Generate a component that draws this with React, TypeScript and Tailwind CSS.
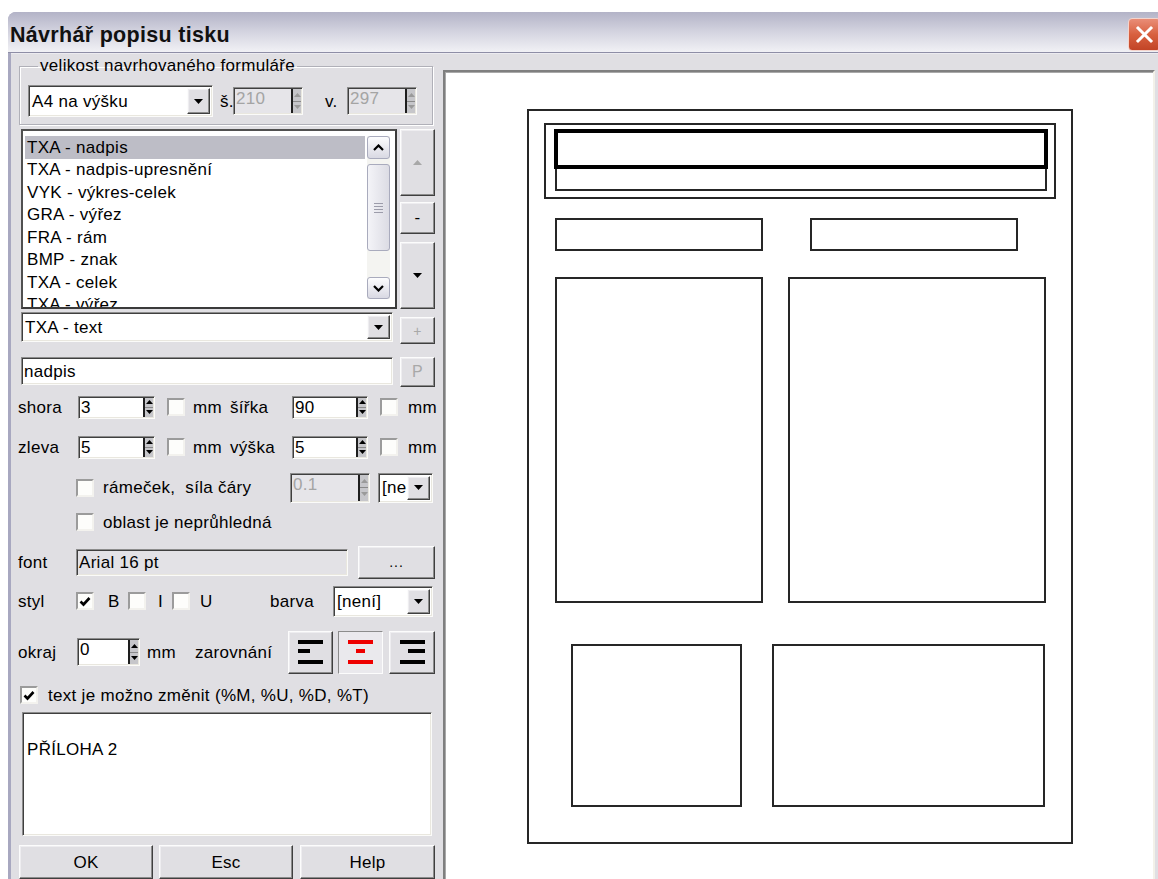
import React from "react";

// Win32-style bevels
const SUNKEN =
  "border border-t-[#8c8c8c] border-l-[#8c8c8c] border-r-[#fbfbf9] border-b-[#fbfbf9] shadow-[inset_1px_1px_0_#3f3f3f,inset_-1px_-1px_0_#e9e7df]";
const RAISED =
  "bg-[#e0dfe3] border border-t-[#fcfcfc] border-l-[#fcfcfc] border-r-[#3f3f3f] border-b-[#3f3f3f] shadow-[inset_-1px_-1px_0_#8c8c8c,inset_1px_1px_0_#eeedf0]";
const PRESSED =
  "bg-[#eae9ed] border border-t-[#8c8c8c] border-l-[#8c8c8c] border-r-[#fcfcfc] border-b-[#fcfcfc]";

function TriDown({ color = "#000" }: { color?: string }) {
  return (
    <svg width="9" height="5" viewBox="0 0 9 5">
      <path d="M0 0H9L4.5 5Z" fill={color} />
    </svg>
  );
}

function TriUp({ color = "#000", w = 9, h = 5 }: { color?: string; w?: number; h?: number }) {
  return (
    <svg width={w} height={h} viewBox={`0 0 ${w} ${h}`}>
      <path d={`M0 ${h}H${w}L${w / 2} 0Z`} fill={color} />
    </svg>
  );
}

function DropBtn() {
  return (
    <div className={`${RAISED} w-[23px] my-[2px] mr-[2px] flex items-center justify-center shrink-0`}>
      <TriDown />
    </div>
  );
}

function Combo({ cls, text }: { cls: string; text: string }) {
  return (
    <div className={`${SUNKEN} bg-white flex ${cls}`}>
      <span className="flex-1 min-w-0 overflow-hidden whitespace-nowrap pl-[3px] self-center">{text}</span>
      <DropBtn />
    </div>
  );
}

function Spinner({ disabled }: { disabled?: boolean }) {
  const c = disabled ? "#9a9a9a" : "#000";
  return (
    <div className="w-[10px] shrink-0 border-l-2 border-[#1e1e1e] bg-[#c6c6ca] flex flex-col my-[1px] mr-[1px]">
      <div className="flex-1 flex items-center justify-center border-b border-[#8a8a8a]">
        <TriUp color={c} w={7} h={4} />
      </div>
      <div className="flex-1 flex items-center justify-center">
        <svg width="7" height="4" viewBox="0 0 7 4">
          <path d="M0 0H7L3.5 4Z" fill={c} />
        </svg>
      </div>
    </div>
  );
}

function Spin({ cls, value, disabled }: { cls: string; value: string; disabled?: boolean }) {
  return (
    <div className={`${SUNKEN} ${disabled ? "bg-[#e6e5e9] text-[#a4a4a4]" : "bg-white"} flex ${cls}`}>
      <span className="flex-1 pl-[2px] pt-[2px] self-start">{value}</span>
      <Spinner disabled={disabled} />
    </div>
  );
}

function Check({ checked, cls = "" }: { checked?: boolean; cls?: string }) {
  return (
    <div
      className={`w-[18px] h-[18px] shrink-0 border-2 border-t-[#9b9b9b] border-l-[#9b9b9b] border-r-[#f3f2ee] border-b-[#f3f2ee] bg-[#fdfdfb] flex items-center justify-center ${cls}`}
    >
      {checked && (
        <svg width="12" height="11" viewBox="0 0 12 11">
          <path d="M1.5 5.5L4.5 8.5L10.5 2" stroke="#000" strokeWidth="2.6" fill="none" />
        </svg>
      )}
    </div>
  );
}

function Btn({ cls, children }: { cls: string; children?: React.ReactNode }) {
  return <div className={`${RAISED} flex items-center justify-center shrink-0 ${cls}`}>{children}</div>;
}

function ScrollBtn({ cls, up }: { cls: string; up?: boolean }) {
  return (
    <div
      className={`rounded-[3px] border border-[#a9abbd] bg-linear-to-b from-[#fdfdfe] to-[#d9d9e3] flex items-center justify-center ${cls}`}
    >
      <svg width="11" height="7" viewBox="0 0 11 7">
        <path d={up ? "M1 6L5.5 1.5L10 6" : "M1 1L5.5 5.5L10 1"} stroke="#000" strokeWidth="2.2" fill="none" />
      </svg>
    </div>
  );
}

function AlignIcon({ mid, midW, color }: { mid: "l" | "c" | "r"; midW: number; color: string }) {
  const x = mid === "l" ? 0 : mid === "c" ? (25 - midW) / 2 : 25 - midW;
  return (
    <svg width="25" height="24" viewBox="0 0 25 24">
      <rect x="0" y="0" width="25" height="4" fill={color} />
      <rect x={x} y="9" width={midW} height="4" fill={color} />
      <rect x="0" y="20" width="25" height="4" fill={color} />
    </svg>
  );
}

const ITEMS = [
  "TXA - nadpis",
  "TXA - nadpis-upresnění",
  "VYK - výkres-celek",
  "GRA - výřez",
  "FRA - rám",
  "BMP - znak",
  "TXA - celek",
  "TXA - výřez",
];

function LeftPanel() {
  return (
    <div className="w-[426px] shrink-0 pl-[7px] flex flex-col">
      {/* page size group */}
      <fieldset className="mt-[2px] ml-[1px] w-[414px] h-[69px] border border-[#b0b0b8] shadow-[inset_1px_1px_0_#fff,1px_1px_0_#fff] pl-[8px] pt-[9px]">
        <legend className="ml-[10px] px-[2px] leading-[20px]">velikost navrhovaného formuláře</legend>
        <div className="flex items-center h-[32px]">
          <Combo cls="w-[185px] h-[32px]" text="A4 na výšku" />
          <span className="ml-[7px] w-[13px]">š.</span>
          <Spin cls="w-[70px] h-[28px]" value="210" disabled />
          <span className="ml-[22px] w-[22px]">v.</span>
          <Spin cls="w-[70px] h-[28px]" value="297" disabled />
        </div>
      </fieldset>

      {/* item list */}
      <div className="mt-[4px] h-[180px] flex">
        <div className="ml-[3px] w-[376px] border-2 border-t-[#505050] border-l-[#505050] border-r-[#3a3a3a] border-b-[#3a3a3a] bg-white flex overflow-hidden">
          <div className="flex-1 pt-[5px] pl-[2px] mr-[2px] overflow-hidden">
            {ITEMS.map((t, i) => (
              <div
                key={i}
                className={`h-[22.5px] flex items-center pl-[2px] whitespace-nowrap ${i === 0 ? "bg-[#bdbdc6]" : ""}`}
              >
                {t}
              </div>
            ))}
          </div>
          <div className="w-[23px] mr-[5px] mt-[5px] h-[163px] bg-[#f4f4f1] flex flex-col">
            <ScrollBtn cls="h-[23px]" up />
            <div className="mt-[5px] h-[87px] rounded-[3px] border border-[#a9abbd] bg-linear-to-r from-[#f4f4f8] to-[#dcdce4] flex flex-col items-center justify-center gap-[2px]">
              <div className="w-[9px] h-px bg-[#9c9caa]" />
              <div className="w-[9px] h-px bg-[#9c9caa]" />
              <div className="w-[9px] h-px bg-[#9c9caa]" />
              <div className="w-[9px] h-px bg-[#9c9caa]" />
            </div>
            <div className="flex-1" />
            <ScrollBtn cls="h-[22px]" />
          </div>
        </div>
        <div className="ml-[3px] w-[35px] flex flex-col">
          <Btn cls="h-[67px]">
            <TriUp color="#a8a8a8" w={9} h={5} />
          </Btn>
          <Btn cls="mt-[6px] h-[32px]">
            <span className="text-[17px] -mt-[2px]">-</span>
          </Btn>
          <Btn cls="mt-[8px] h-[67px]">
            <TriDown />
          </Btn>
        </div>
      </div>

      {/* type */}
      <div className="mt-[3px] h-[32px] flex">
        <Combo cls="ml-[3px] w-[372px] h-[30px]" text="TXA - text" />
        <Btn cls="ml-[7px] w-[35px] h-[27px] self-end">
          <span className="text-[#a8a8a8] text-[14px]">+</span>
        </Btn>
      </div>

      {/* name */}
      <div className="mt-[13px] h-[30px] flex">
        <div className={`${SUNKEN} ml-[3px] w-[372px] h-[28px] bg-white flex items-center pl-[2px]`}>nadpis</div>
        <Btn cls="ml-[7px] w-[35px] h-[30px]">
          <span className="text-[#a8a8a8] text-[16px]">P</span>
        </Btn>
      </div>

      {/* top / width */}
      <div className="mt-[8px] h-[24px] flex items-center">
        <span className="w-[60px]">shora</span>
        <Spin cls="w-[77px] h-[23px]" value="3" />
        <Check cls="ml-[12px]" />
        <span className="ml-[8px] w-[29px]">mm</span>
        <span className="ml-[8px] w-[62px]">šířka</span>
        <Spin cls="w-[76px] h-[23px]" value="90" />
        <Check cls="ml-[12px]" />
        <span className="ml-[10px]">mm</span>
      </div>

      {/* left / height */}
      <div className="mt-[16px] h-[24px] flex items-center">
        <span className="w-[60px]">zleva</span>
        <Spin cls="w-[77px] h-[23px]" value="5" />
        <Check cls="ml-[12px]" />
        <span className="ml-[8px] w-[29px]">mm</span>
        <span className="ml-[8px] w-[62px]">výška</span>
        <Spin cls="w-[76px] h-[23px]" value="5" />
        <Check cls="ml-[12px]" />
        <span className="ml-[10px]">mm</span>
      </div>

      {/* frame */}
      <div className="mt-[13px] h-[31px] flex items-center">
        <span className="w-[58px]" />
        <Check />
        <span className="ml-[9px] w-[187px] whitespace-pre">rámeček,  síla čáry</span>
        <Spin cls="w-[80px] h-[30px]" value="0.1" disabled />
        <Combo cls="ml-[8px] w-[55px] h-[30px]" text="[není]" />
      </div>

      {/* opaque */}
      <div className="mt-[8px] h-[22px] flex items-center">
        <span className="w-[58px]" />
        <Check />
        <span className="ml-[9px]">oblast je neprůhledná</span>
      </div>

      {/* font */}
      <div className="mt-[12px] h-[34px] flex items-center">
        <span className="w-[58px]">font</span>
        <div className={`${SUNKEN} w-[272px] h-[27px] bg-[#e3e2e6] flex items-center pl-[2px]`}>Arial 16 pt</div>
        <Btn cls="ml-[10px] w-[77px] h-[33px]">
          <span className="text-[14px] tracking-[1px]">...</span>
        </Btn>
      </div>

      {/* style */}
      <div className="mt-[6px] h-[32px] flex items-center">
        <span className="w-[58px]">styl</span>
        <Check checked />
        <span className="ml-[14px] w-[20px]">B</span>
        <Check />
        <span className="ml-[12px] w-[14px]">I</span>
        <Check />
        <span className="ml-[10px] w-[70px]">U</span>
        <span className="w-[63px]">barva</span>
        <Combo cls="w-[100px] h-[31px]" text="[není]" />
      </div>

      {/* margin / alignment */}
      <div className="mt-[13px] h-[44px] flex items-center">
        <span className="w-[59px]">okraj</span>
        <Spin cls="w-[63px] h-[28px]" value="0" />
        <span className="ml-[7px] w-[48px]">mm</span>
        <span className="w-[93px]">zarovnání</span>
        <Btn cls="w-[45px] h-[43px]">
          <AlignIcon mid="l" midW={12} color="#000" />
        </Btn>
        <div className={`${PRESSED} ml-[5px] w-[45px] h-[43px] flex items-center justify-center`}>
          <AlignIcon mid="c" midW={9} color="#ee0000" />
        </div>
        <Btn cls="ml-[6px] w-[46px] h-[43px]">
          <AlignIcon mid="r" midW={17} color="#000" />
        </Btn>
      </div>

      {/* editable text */}
      <div className="mt-[10px] h-[22px] flex items-center">
        <Check checked cls="ml-[2px]" />
        <span className="ml-[10px]">text je možno změnit (%M, %U, %D, %T)</span>
      </div>

      <div className={`${SUNKEN} mt-[6px] ml-[4px] w-[410px] h-[124px] bg-white pt-[28px] pl-[4px]`}>PŘÍLOHA 2</div>

      {/* dialog buttons */}
      <div className="mt-[9px] h-[36px] flex">
        <Btn cls="ml-[1px] w-[134px] h-[34px]">OK</Btn>
        <Btn cls="ml-[6px] w-[134px] h-[34px]">Esc</Btn>
        <Btn cls="ml-[7px] w-[135px] h-[34px]">Help</Btn>
      </div>
    </div>
  );
}

// layout preview; coordinates are relative to the preview's inner corner
const RECTS: { x: number; y: number; w: number; h: number; s: number }[] = [
  { x: 83, y: 38, w: 544, h: 733, s: 2 },
  { x: 100, y: 52, w: 510, h: 74, s: 2 },
  { x: 111, y: 59, w: 490, h: 59, s: 2 },
  { x: 111, y: 147, w: 206, h: 31, s: 2 },
  { x: 366, y: 147, w: 206, h: 31, s: 2 },
  { x: 111, y: 206, w: 206, h: 324, s: 2 },
  { x: 344, y: 206, w: 256, h: 324, s: 2 },
  { x: 127, y: 573, w: 169, h: 161, s: 2 },
  { x: 328, y: 573, w: 271, h: 161, s: 2 },
  { x: 111, y: 59, w: 490, h: 36, s: 4 },
];

function Preview() {
  return (
    <div className="ml-[6px] mt-[16px] w-[712px] h-[830px] shrink-0 bg-white border-2 border-t-[#7f7f7f] border-l-[#7f7f7f] border-r-[#f3f1e9] border-b-[#f3f1e9] shadow-[inset_1px_1px_0_#a9a9a9]">
      <svg width="708" height="826" viewBox="0 0 708 826" className="block">
        {RECTS.map((r, i) => (
          <rect
            key={i}
            x={r.x}
            y={r.y}
            width={r.w}
            height={r.h}
            fill="none"
            stroke={r.s > 2 ? "#000" : "#262626"}
            strokeWidth={r.s}
          />
        ))}
      </svg>
    </div>
  );
}

function TitleBar() {
  return (
    <div className="h-[41px] shrink-0 flex items-start pl-[2px] bg-linear-to-b from-[#b3b3c7] via-[#d4d4e0] to-[#f1f1f5] border-b border-[#8e8ea6]">
      <span className="mt-[13px] font-bold text-[21.5px] text-[#111]">Návrhář popisu tisku</span>
      <div className="ml-auto mt-[6px] w-[33px] h-[33px] rounded-[4px] border border-[#f4d4cc] bg-linear-to-b from-[#e98d77] via-[#d8603f] to-[#c24426] flex items-center justify-center">
        <svg width="19" height="19" viewBox="0 0 19 19">
          <path d="M3 3L16 16M16 3L3 16" stroke="#fff" strokeWidth="3" strokeLinecap="square" />
        </svg>
      </div>
    </div>
  );
}

export default function App() {
  return (
    <div className="w-[1158px] h-[879px] overflow-hidden bg-white font-['Liberation_Sans',Arial,sans-serif] text-[17px] leading-none text-black tracking-[0.3px]">
      <div className="ml-[8px] mt-[12px] w-[1153px] h-[880px] rounded-tl-[8px] overflow-hidden bg-[#a8a8c0] flex flex-col">
        <TitleBar />
        <div className="flex-1 ml-[3px] bg-[#e0dfe3] border-t border-[#ecebf0] flex">
          <LeftPanel />
          <Preview />
        </div>
      </div>
    </div>
  );
}
